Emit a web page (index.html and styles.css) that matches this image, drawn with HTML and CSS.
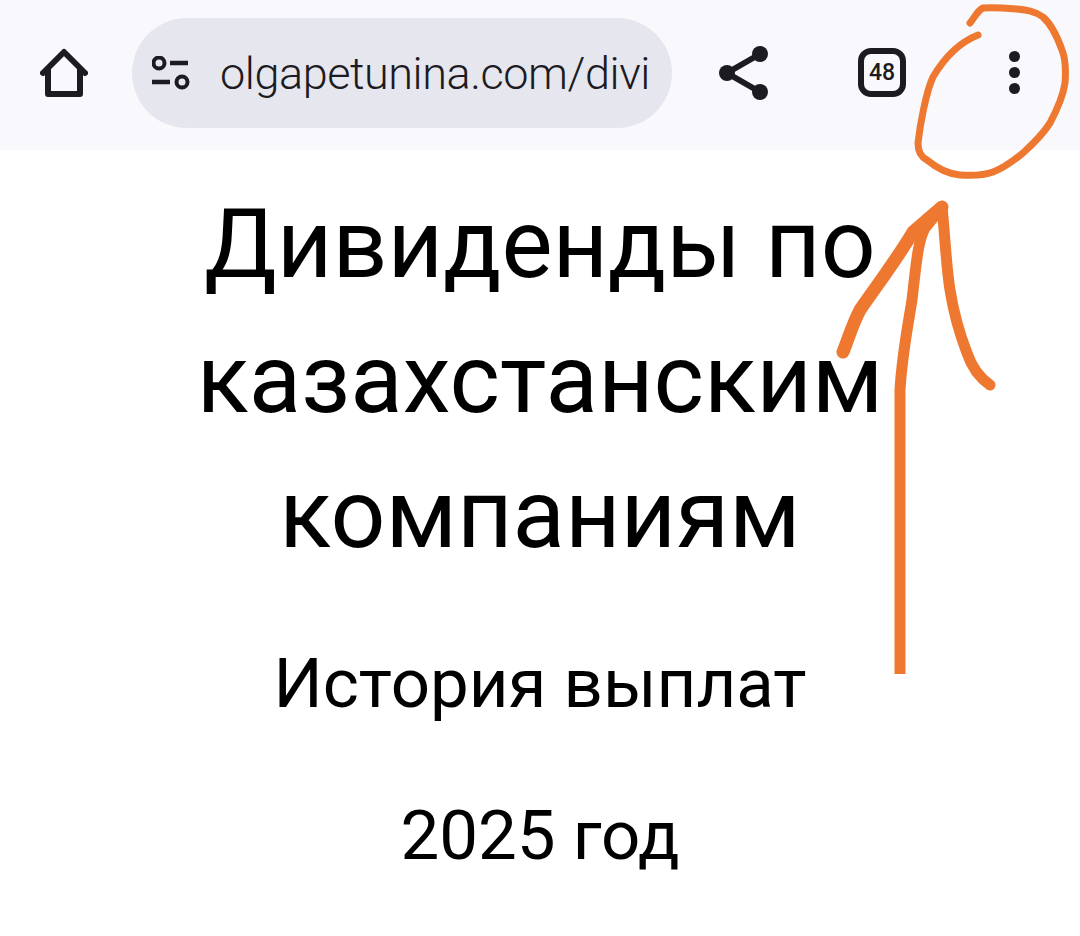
FILE: index.html
```html
<!DOCTYPE html>
<html lang="ru">

<head>
    <meta charset="UTF-8">
    <meta name="viewport" content="width=device-width, initial-scale=1.0">
    <title>Дивиденды по казахстанским компаниям</title>
    <link rel="stylesheet" href="styles.css">
</head>

<body>
    <div class="toolbar">
        <svg class="icon-home" width="48" height="50" viewBox="0 0 48 50">
            <path d="M3 25 L24 4 L45 25 M8 22 V46 H40 V22" fill="none" stroke="#1c1b21" stroke-width="6" stroke-linejoin="round" stroke-linecap="round"/>
        </svg>
        <div class="address">
            <svg class="icon-tune" width="38" height="34" viewBox="0 0 38 34">
                <circle cx="7" cy="7" r="5.5" fill="none" stroke="#1c1b21" stroke-width="4"/>
                <path d="M18 7 H36 M0 26 H18" stroke="#1c1b21" stroke-width="4.5"/>
                <circle cx="30" cy="26" r="5.5" fill="none" stroke="#1c1b21" stroke-width="4"/>
            </svg>
            <span class="url">olgapetunina.com/divi</span>
        </div>
        <svg class="icon-share" width="52" height="56" viewBox="0 0 52 56">
            <path d="M42 9 L9 28 L42 47" fill="none" stroke="#1c1b21" stroke-width="6"/>
            <circle cx="42" cy="9" r="8" fill="#1c1b21"/>
            <circle cx="9" cy="28" r="8" fill="#1c1b21"/>
            <circle cx="42" cy="47" r="8" fill="#1c1b21"/>
        </svg>
        <div class="tabs">48</div>
        <div class="menu">
            <span class="dot"></span>
            <span class="dot"></span>
            <span class="dot"></span>
        </div>
    </div>

    <div class="content">
        <h1>Дивиденды по казахстанским компаниям</h1>
        <p>История выплат</p>
        <p>2025 год</p>
    </div>

    <!-- hand drawn marks on top of the screenshot -->
    <svg class="marks" width="1080" height="936" viewBox="0 0 1080 936">
        <g fill="none" stroke="#ee7830" stroke-linejoin="round">
            <path stroke-linecap="round" stroke-width="7" d="M978 35 C958 43 943 60 933 77 C926 92 920 125 918 143 C918 152 921 157 927 160 C938 169 948 174 960 175 C975 176 985 175 993 172 C1006 167 1014 160 1023 153 C1034 143 1043 134 1050 123 C1058 108 1063 96 1065 83 C1066 70 1066 60 1062 50 C1057 36 1051 24 1043 17 C1035 11 1026 10 1017 9 C1005 8 993 7 983 8 C977 11 975 17 970 23"/>
            <path stroke-width="11" d="M900 674 V390 C902 355 908 325 912 300 C916 265 918 240 925 228 L942 207"/>
            <path stroke-linecap="round" stroke-width="13" d="M843 352 C848 340 852 325 860 310 C875 288 895 262 913 232 L942 207"/>
            <path stroke-linecap="round" stroke-width="11" d="M942 207 C945 235 946 265 950 290 C954 315 960 335 967 353 C972 368 980 378 990 385"/>
        </g>
    </svg>
</body>

</html>
```

FILE: styles.css
```css
body {
    margin: 0;
    background: white;
    font-family: Roboto, "Liberation Sans", sans-serif;
    color: black;
    overflow: hidden;
}

.toolbar {
    height: 150px;
    background-color: #f8f8fd;
    display: flex;
    align-items: flex-start;
    padding-top: 18px;
    box-sizing: border-box;
}

.icon-home {
    margin: 30px 0 0 40px;
    flex: none;
}

.address {
    margin-left: 44px;
    width: 540px;
    height: 110px;
    border-radius: 55px;
    background-color: #e6e6ef;
    display: flex;
    align-items: center;
    padding-left: 20px;
    box-sizing: border-box;
    flex: none;
    overflow: hidden;
}

.icon-tune {
    flex: none;
    margin-right: 30px;
    margin-top: 0;
}

.url {
    font-size: 45px;
    font-weight: 300;
    letter-spacing: -0.45px;
    color: #1c1b21;
    white-space: nowrap;
}

.icon-share {
    margin: 27px 0 0 46px;
    flex: none;
}

.tabs {
    margin: 30px 0 0 88px;
    width: 48px;
    height: 49px;
    box-sizing: border-box;
    border: 6px solid #1c1b21;
    border-radius: 13px;
    font-size: 23px;
    font-weight: 500;
    color: #1c1b21;
    display: flex;
    align-items: center;
    justify-content: center;
    flex: none;
}

.menu {
    margin: 33px 0 0 103px;
    display: flex;
    flex-direction: column;
    gap: 5px;
    flex: none;
}

.dot {
    width: 11px;
    height: 11px;
    border-radius: 50%;
    background-color: #1c1b21;
}

.content {
    width: 760px;
    margin: 0 auto;
    text-align: center;
}

h1 {
    font-size: 96.4px;
    font-weight: 400;
    line-height: 135px;
    margin: 27px 0 0 0;
}

p {
    font-size: 69px;
    line-height: 80px;
    margin: 0;
}

h1 + p {
    margin-top: 62px;
}

p + p {
    margin-top: 72px;
}

.marks {
    position: absolute;
    top: 0;
    left: 0;
    pointer-events: none;
}
```
